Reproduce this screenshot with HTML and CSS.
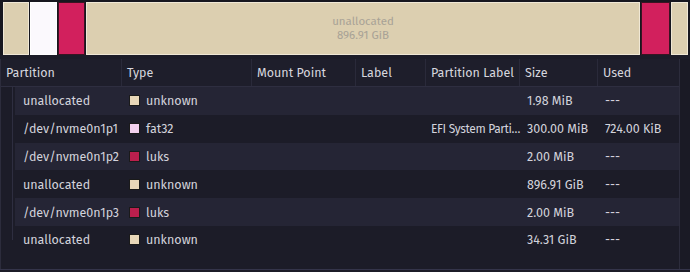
FILE: index.html
```html
<!DOCTYPE html>
<html>
<head>
<meta charset="utf-8">
<link rel="stylesheet" href="styles.css">
</head>
<body>
<div class="bar">
  <div class="seg beige" style="width:26px"></div>
  <div class="seg white" style="width:27px"></div>
  <div class="seg crimson" style="width:27px"></div>
  <div class="seg beige big" style="width:555px"><span>unallocated</span><span>896.91 GiB</span></div>
  <div class="seg crimson" style="width:29px"></div>
  <div class="seg beige" style="width:17px"></div>
</div>
<div class="view">
  <div class="table">
    <div class="row head">
      <div class="c">Partition</div><div class="c">Type</div><div class="c">Mount Point</div><div class="c">Label</div><div class="c">Partition Label</div><div class="c">Size</div><div class="c">Used</div>
    </div>
    <div class="body">
      <div class="row alt"><div class="c name">unallocated</div><div class="c"><i class="sw unk"></i>unknown</div><div class="c"></div><div class="c"></div><div class="c"></div><div class="c">1.98 MiB</div><div class="c">---</div></div>
      <div class="row"><div class="c name">/dev/nvme0n1p1</div><div class="c"><i class="sw fat"></i>fat32</div><div class="c"></div><div class="c"></div><div class="c ell">EFI System Parti…</div><div class="c">300.00 MiB</div><div class="c">724.00 KiB</div></div>
      <div class="row alt"><div class="c name">/dev/nvme0n1p2</div><div class="c"><i class="sw luks"></i>luks</div><div class="c"></div><div class="c"></div><div class="c"></div><div class="c">2.00 MiB</div><div class="c">---</div></div>
      <div class="row"><div class="c name">unallocated</div><div class="c"><i class="sw unk"></i>unknown</div><div class="c"></div><div class="c"></div><div class="c"></div><div class="c">896.91 GiB</div><div class="c">---</div></div>
      <div class="row alt"><div class="c name">/dev/nvme0n1p3</div><div class="c"><i class="sw luks"></i>luks</div><div class="c"></div><div class="c"></div><div class="c"></div><div class="c">2.00 MiB</div><div class="c">---</div></div>
      <div class="row"><div class="c name">unallocated</div><div class="c"><i class="sw unk"></i>unknown</div><div class="c"></div><div class="c"></div><div class="c"></div><div class="c">34.31 GiB</div><div class="c">---</div></div>
    </div>
  </div>
  <div class="side"></div>
</div>
</body>
</html>
```

FILE: styles.css
```css
html, body {
  margin: 0;
  padding: 0;
  background: #1c1c28;
  font-family: "Fira Sans", "Noto Sans", "Open Sans", sans-serif;
  font-size: 12.5px;
  color: #d3d3dc;
  width: 690px;
  height: 272px;
  overflow: hidden;
}

.bar {
  display: flex;
  gap: 1px;
  padding: 2px 2px 0 3px;
  height: 53px;
  background: #17171f;
}

.seg {
  box-sizing: border-box;
  height: 53px;
  border: 1px solid #2a2520;
}

.beige { background: #dccfb0; border-color: #f0e8d6; }
.white { background: #fbf9fd; border-color: #ffffff; }
.crimson { background: #d2205d; border-color: #3a1422; }

.big {
  display: flex;
  flex-direction: column;
  align-items: center;
  justify-content: center;
  color: #a8a296;
  font-size: 11.5px;
  line-height: 14px;
  padding-bottom: 2px;
}

.view {
  display: flex;
  height: 211px;
  margin-top: 4px;
  border-bottom: 1px solid #34344a;
  box-sizing: border-box;
}

.table {
  width: 680px;
  border-left: 1px solid #2c2c3c;
  border-right: 1px solid #2c2c3c;
  box-sizing: border-box;
}

.side {
  flex: 1;
  background: #1a1a25;
}

.row {
  display: grid;
  grid-template-columns: 121px 130px 104px 70px 94px 78px 1fr;
  height: 27.8px;
  align-items: center;
}

.head {
  height: 27px;
  background: #1e1e2b;
  border-bottom: 1px solid #2e2e40;
}

.head .c {
  padding-left: 5px;
  border-right: 1px solid #2a2a3a;
  height: 27px;
  line-height: 27px;
  color: #d6d6de;
}

.head .c:last-child { border-right: none; }

.body {
  background-image: linear-gradient(#2e2e40, #2e2e40);
  background-size: 1px 153px;
  background-position: 11px 0;
  background-repeat: no-repeat;
}

.body .row {
  margin-left: 14px;
  grid-template-columns: 107px 130px 104px 70px 94px 78px 1fr;
}

.body .row.alt { background: #252535; }

.c {
  padding-left: 7px;
  white-space: nowrap;
  overflow: hidden;
  display: flex;
  align-items: center;
}

.name { padding-left: 8px; }

.ell {
  padding-left: 5px;
  font-size: 12px;
  letter-spacing: -0.35px;
  overflow: visible;
}

.sw {
  display: inline-block;
  width: 9px;
  height: 9px;
  margin-right: 6px;
  border: 1px solid #1a1a1a;
}

.unk { background: #e8d7b8; }
.fat { background: #f2d0ee; }
.luks { background: #bb1f4d; }
```
